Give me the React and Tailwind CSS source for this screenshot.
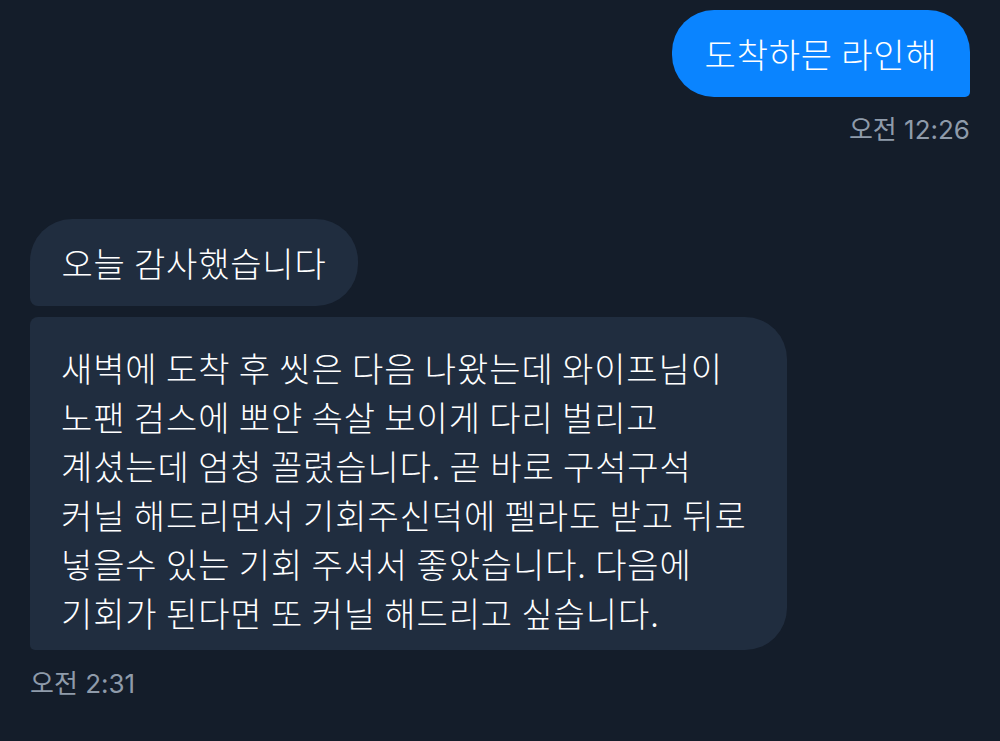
import React from "react";

const font = { fontFamily: '"Noto Sans CJK KR", "Noto Sans", sans-serif' };
const tsFont = { fontFamily: 'Inter, "Noto Sans CJK KR", sans-serif' };

export default function App() {
  const lines = [
    "새벽에 도착 후 씻은 다음 나왔는데 와이프님이",
    "노팬 검스에 뽀얀 속살 보이게 다리 벌리고",
    "계셨는데 엄청 꼴렸습니다. 곧 바로 구석구석",
    "커닐 해드리면서 기회주신덕에 펠라도 받고 뒤로",
    "넣을수 있는 기회 주셔서 좋았습니다. 다음에",
    "기회가 된다면 또 커닐 해드리고 싶습니다.",
  ];
  return (
    <div className="w-[1000px] h-[741px] bg-[#141d2a] overflow-hidden flex flex-col" style={font}>
      <div className="flex flex-col items-end pt-[10px] pr-[30px]">
        <div className="bg-[#0a84ff] text-white text-[34px] font-light leading-[87px] h-[87px] w-[298px] text-center rounded-[42px] rounded-br-[5px] tracking-[0.8px]">
          도착하믄 라인해
        </div>
        <div className="mt-[16px] text-[26px] font-normal leading-[34px] text-[#8f9baa]" style={tsFont}>
          오전 12:26
        </div>
      </div>
      <div className="flex flex-col items-start pl-[30px] mt-[72px]">
        <div className="bg-[#202d3f] text-white text-[34px] font-light leading-[87px] h-[87px] w-[328px] text-center rounded-[42px] rounded-bl-[8px] tracking-[0.8px]">
          오늘 감사했습니다
        </div>
        <div className="mt-[11px] bg-[#202d3f] text-white text-[34px] font-light leading-[49px] w-[757px] pl-[31px] pt-[26px] pb-[13px] rounded-[42px] rounded-tl-[8px] rounded-bl-[5px] tracking-[0.9px]">
          {lines.map((l, i) => (
            <div key={i} className="whitespace-nowrap">{l}</div>
          ))}
        </div>
        <div className="mt-[17px] text-[26px] font-normal leading-[34px] text-[#8f9baa]" style={tsFont}>
          오전 2:31
        </div>
      </div>
    </div>
  );
}
